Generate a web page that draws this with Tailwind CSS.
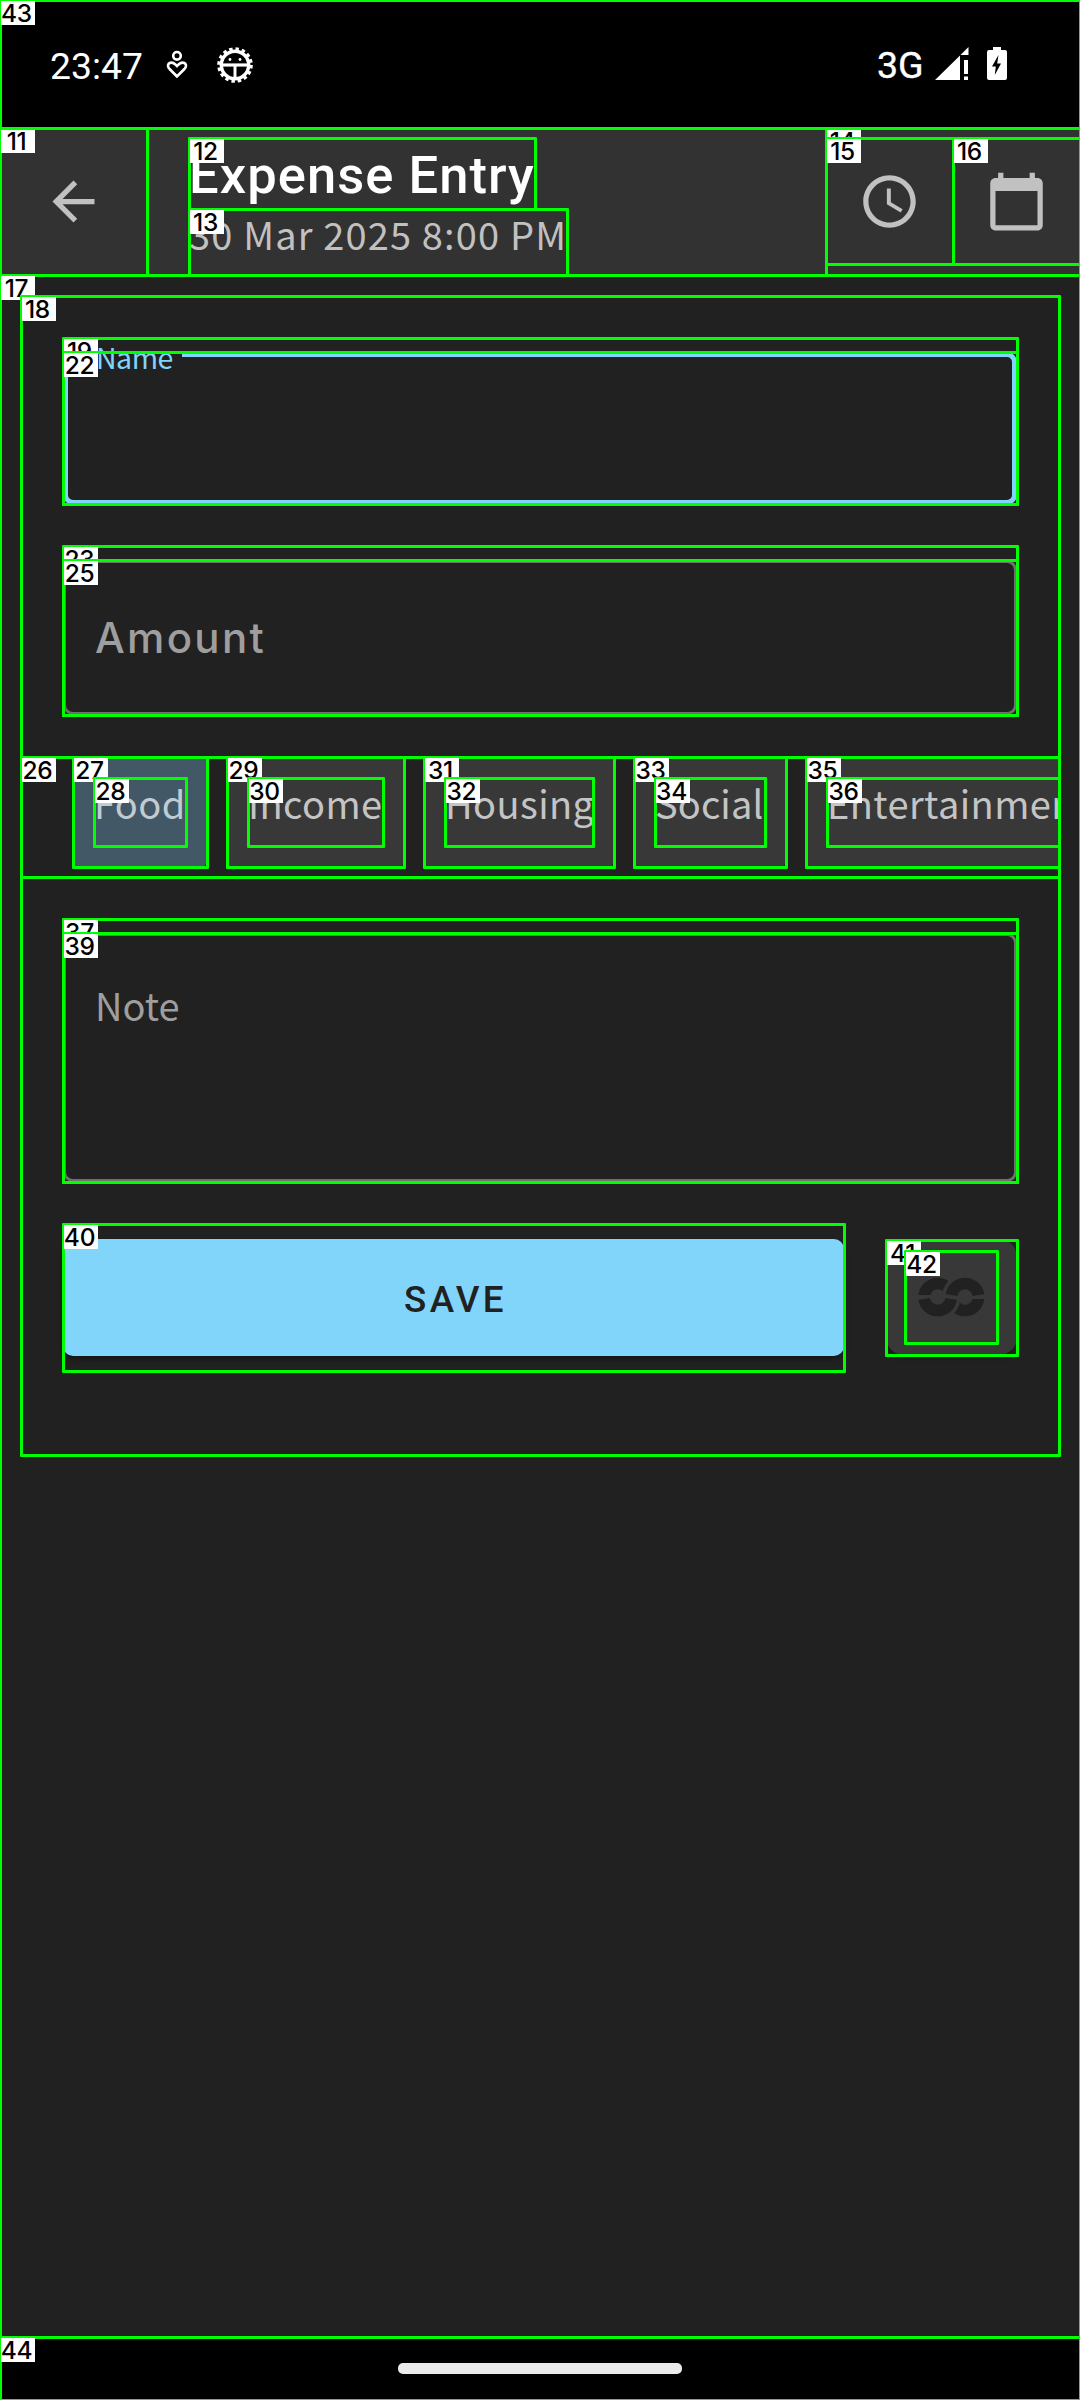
<!DOCTYPE html>
<html lang="en">
<head>
<meta charset="utf-8">
<title>Expense Entry</title>
<script src="https://cdn.jsdelivr.net/npm/@tailwindcss/browser@4"></script>
</head>
<body class="bg-black">
<div class="relative flex h-[2400px] w-[1080px] flex-col overflow-hidden bg-[#212121] font-['Roboto',sans-serif]">

  <!-- Status bar -->
  <header class="flex h-32 shrink-0 items-start bg-black pl-[50px] pr-[73px] pt-[42px] text-white">
    <span class="w-[116px] whitespace-nowrap text-[37.3px] leading-[48px]">23:47</span>
    <svg class="mt-[8px] h-[30px] w-[22px]" viewBox="0 0 22 30" fill="none" stroke="#fff" stroke-width="2.6"><circle cx="11" cy="5.8" r="3.8"/><path d="M11 26.5 3.6 19C.5 15.500 2.500 12.600 5.500 12.600c2.400 0 3.900 1.600 5.500 3.400 1.600-1.800 3.100-3.400 5.500-3.400 3 0 5 2.900 1.900 6.400z"/></svg>
    <svg class="ml-[29px] mt-[5px] h-9 w-9" viewBox="-18 -18 36 36"><circle r="13.700" fill="none" stroke="#fff" stroke-width="3.400"/><circle r="16" fill="none" stroke="#fff" stroke-width="3.600" stroke-dasharray="3.400 2.883"/><path d="M-13 0H13" stroke="#fff" stroke-width="3.200"/><path d="M0 0V13" stroke="#fff" stroke-width="3"/><circle cx="-5" cy="-5.500" r="1.400" fill="#fff"/><circle cx="5" cy="-5.500" r="1.400" fill="#fff"/></svg>
    <div class="flex-1"></div>
    <span class="w-[58px] whitespace-nowrap text-[37.5px] leading-[46px] [-webkit-text-stroke:0.4px_white]">3G</span>
    <svg class="mt-[5px] h-[33px] w-[34px]" viewBox="0 0 34 33" fill="#fff"><path d="M0 33 25 8.500V33zM25.500 8 33.500 0V8zM29 13h4v14h-4zM29 29.500h4v3.500h-4z"/></svg>
    <svg class="ml-[17px] mt-[5px] h-[33px] w-[21px]" viewBox="0 0 21 33"><path d="M7 0h8v3h4q2 0 2 2v26q0 2-2 2H3q-2 0-2-2V5q0-2 2-2h4z" fill="#fff"/><path d="M12.500 8 6 19.500h3.800L8.800 28 15 16.500h-3.800z" fill="#000"/></svg>
  </header>

  <!-- App bar -->
  <div class="flex h-[148px] shrink-0 items-start bg-[#323232] text-[#c1c1c1]">
    <div class="flex h-[147px] w-[147px] items-center justify-center"><svg class="h-[63px] w-[63px]" viewBox="0 0 24 24" fill="currentColor"><path d="M20 11H7.830l5.590-5.590L12 4l-8 8 8 8 1.410-1.410L7.830 13H20v-2z"/></svg></div>
    <div class="flex flex-1 flex-col whitespace-nowrap pl-[42px] pt-[10px]">
      <h1 class="h-[69px] text-[52.5px] font-medium leading-[75px] tracking-[1.05px] text-white">Expense Entry</h1>
      <p class="font-['Noto_Sans_CJK_SC',sans-serif] text-[38px] leading-[54px] tracking-[1.15px]">30 Mar 2025 8:00 PM</p>
    </div>
    <div class="flex pt-[10px]">
      <div class="flex h-[126px] w-[127px] items-center justify-center"><svg class="h-[63px] w-[63px]" viewBox="0 0 24 24" fill="currentColor"><path d="M11.990 2C6.470 2 2 6.480 2 12s4.470 10 9.990 10C17.520 22 22 17.520 22 12S17.520 2 11.990 2zM12 20c-4.420 0-8-3.580-8-8s3.580-8 8-8 8 3.580 8 8-3.580 8-8 8zm.5-13H11v6l5.250 3.150.75-1.230-4.500-2.670z"/></svg></div>
      <div class="flex h-[126px] w-[127px] items-center justify-center"><svg class="h-[63px] w-[63px]" viewBox="0 0 24 24" fill="currentColor"><path d="M20 3h-1V1h-2v2H7V1H5v2H4c-1.100 0-2 .9-2 2v16c0 1.100.9 2 2 2h16c1.100 0 2-.9 2-2V5c0-1.100-.9-2-2-2zm0 18H4V8h16v13z"/></svg></div>
    </div>
  </div>

  <!-- Form -->
  <main class="mx-[21px] flex flex-1 flex-col overflow-hidden pt-[76px] font-['Noto_Sans_CJK_SC',sans-serif] text-[38px]">
    <div class="relative mx-[42px] h-[153px] w-[954px] shrink-0 rounded-[10px] border-5 border-[#81d4fa]">
      <span class="absolute -top-[20px] left-[25px] w-[89px] whitespace-nowrap bg-[#212121] pl-[3px] text-[28.5px] leading-[40px] tracking-[-0.5px] text-[#81d4fa]">Name</span>
    </div>
    <div class="mx-[42px] mt-[55px] flex h-[155px] w-[954px] shrink-0 items-center rounded-[10px] border-3 border-[#707070] pl-[29px] font-['Inter',sans-serif] text-[42px] font-medium tracking-[2.3px] text-[#9e9e9e]">Amount</div>
    <div class="mt-[42px] flex h-[120px] shrink-0 gap-[20px] whitespace-nowrap pl-[52px] leading-[54px] tracking-[0.4px] text-[#c4c4c4]">
      <div class="h-[110px] w-[134px] shrink-0 rounded-md bg-[#435866] pl-[21px] pt-[19px] text-[#c0cbd2]">Food</div>
      <div class="h-[110px] w-[177px] shrink-0 rounded-md bg-[#383838] pl-[21px] pt-[19px]">Income</div>
      <div class="h-[110px] w-[190px] shrink-0 rounded-md bg-[#383838] pl-[21px] pt-[19px]">Housing</div>
      <div class="h-[110px] w-[152px] shrink-0 rounded-md bg-[#383838] pl-[21px] pt-[19px] tracking-[0.1px]">Social</div>
      <div class="h-[110px] w-[300px] shrink-0 rounded-md bg-[#383838] pl-[21px] pt-[19px]">Entertainment</div>
    </div>
    <div class="mx-[42px] mt-[56px] h-[249px] w-[954px] shrink-0 rounded-[10px] border-3 border-[#707070] pl-[29px] pt-[42px] leading-[54px] text-[#9e9e9e]">Note</div>
    <div class="mt-[57px] flex shrink-0 gap-[42px] pl-[42px]">
      <button class="h-[117px] w-[781px] rounded-[10px] bg-[#81d4fa] pl-[4px] pt-[4px] font-['Roboto',sans-serif] text-[36.75px] font-medium tracking-[3.3px] text-[#212121] shadow-md shadow-black/30">SAVE</button>
      <div class="flex h-[116px] w-[131px] items-center justify-center rounded-[18px] bg-[#383838] pr-[2px] shadow-md shadow-black/20">
        <svg class="h-[40px] w-[68px]" viewBox="0 0 204 120">
          <defs>
            <mask id="upper" maskUnits="userSpaceOnUse" x="0" y="0" width="204" height="120"><path d="M0 0H204V54H0z" fill="#fff"/><circle cx="144" cy="60" r="69" fill="#000"/></mask>
            <mask id="lower" maskUnits="userSpaceOnUse" x="0" y="0" width="204" height="120"><path d="M0 66H204V120H0z" fill="#fff"/><circle cx="62" cy="60" r="69" fill="#000"/></mask>
          </defs>
          <g fill="none" stroke="#212121" stroke-width="35">
            <circle cx="62" cy="60" r="40.500" mask="url(#upper)"/>
            <path d="M103.500 54a41 41 0 0 1 81 0"/>
            <path d="M21.500 66a41 41 0 0 0 81 0"/>
            <circle cx="144" cy="60" r="40.500" mask="url(#lower)"/>
          </g>
        </svg>
      </div>
    </div>
  </main>

  <!-- Navigation bar -->
  <footer class="flex h-[63px] shrink-0 items-start justify-center bg-black pt-[26px]"><div class="h-[11px] w-[284px] rounded-[5px] bg-[#ebebeb]"></div></footer>

  <!-- Numbered element bounds -->
  <div id="bounds" class="pointer-events-none absolute inset-0 overflow-hidden"></div>
</div>
<script>
const bounds = [
  [11,0,128,147,275],[12,189,138,535,209],[13,189,209,567,275],[14,826,128,1080,275],[15,826,138,953,264],[16,953,138,1080,264],
  [17,0,275,1080,2337],[18,21,296,1059,1455],[19,63,338,1017,504],[22,63,352,1017,504],[23,63,546,1017,715],[25,63,560,1017,715],
  [26,21,757,1059,877],[27,73,757,207,867],[28,94,778,186,846],[29,227,757,404,867],[30,248,778,383,846],[31,424,757,614,867],
  [32,445,778,593,846],[33,634,757,786,867],[34,655,778,765,846],[35,806,757,1059,867],[36,827,778,1059,846],
  [37,63,919,1017,1182],[39,63,933,1017,1182],[40,63,1224,844,1371],[41,886,1240,1017,1355],[42,905,1251,997,1343],
  [43,0,0,1080,128],[44,0,2337,1080,2400]
];
document.getElementById('bounds').innerHTML = bounds.map(([n, l, t, r, b]) =>
  `<div class="absolute rounded-[1px] border-3 border-[#00ff00]" style="left:${l-1}px;top:${t-1}px;width:${r-l+3}px;height:${b-t+3}px"></div>` +
  `<div class="absolute h-6 w-[34px] bg-white pr-[3px] text-[24.5px] leading-6 font-medium text-black" style="left:${l+1}px;top:${t+1}px"><span class="flex justify-center font-['Inter',sans-serif] tracking-[-0.3px]">${n}</span></div>`
).join('');
</script>
</body>
</html>
